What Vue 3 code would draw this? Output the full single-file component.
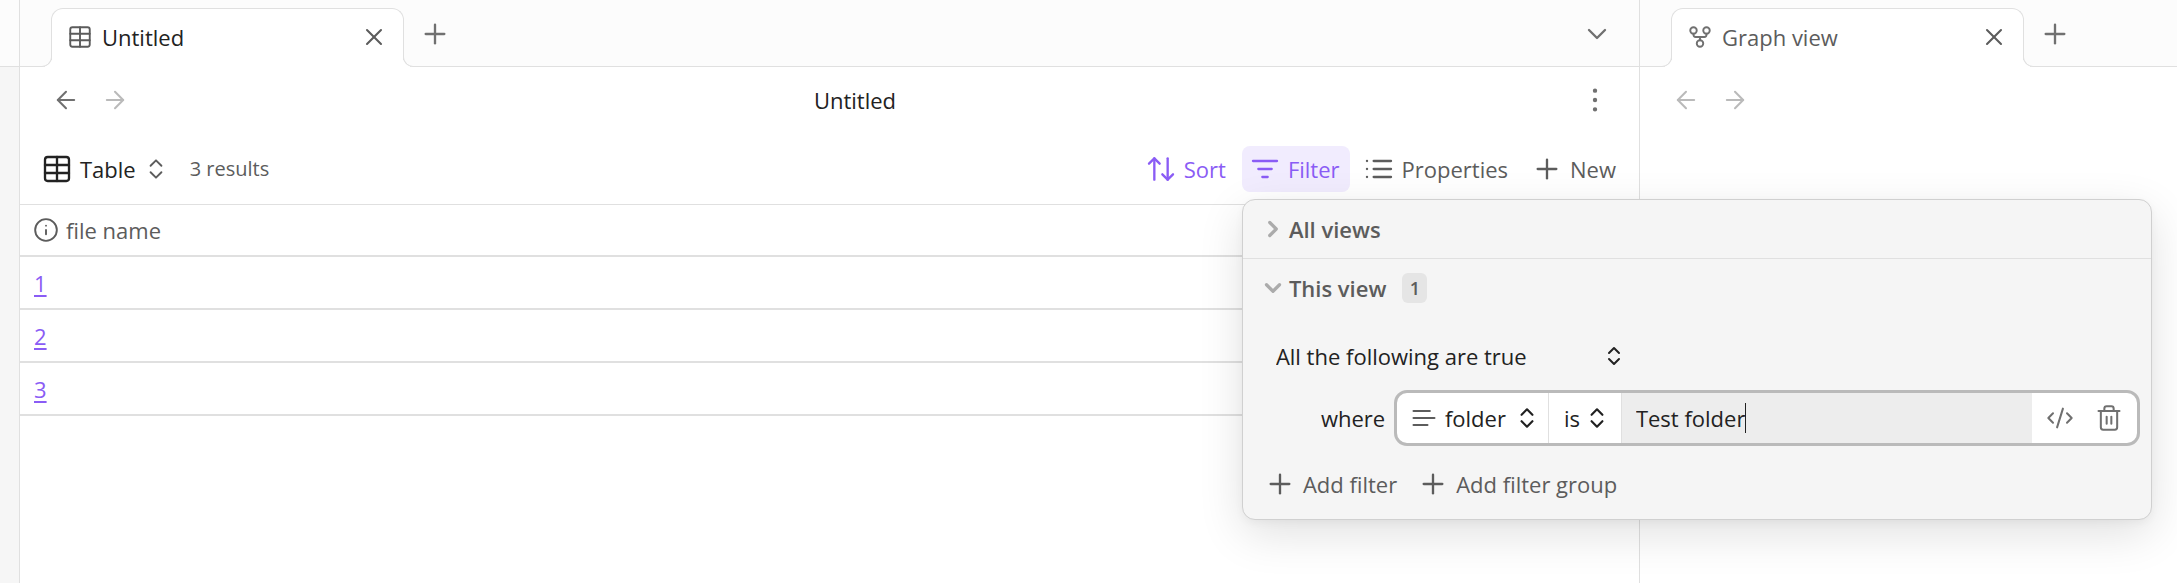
<script setup>
import { ref } from 'vue'

const icons = {
  table: ['M5 3h14a2 2 0 0 1 2 2v14a2 2 0 0 1-2 2H5a2 2 0 0 1-2-2V5a2 2 0 0 1 2-2z', 'M12 3v18', 'M3 9h18', 'M3 15h18'],
  close: ['M18 6 6 18', 'm6 6 12 12'],
  plus: ['M5 12h14', 'M12 5v14'],
  down: ['m6 9 6 6 6-6'],
  right: ['m9 18 6-6-6-6'],
  back: ['m12 19-7-7 7-7', 'M19 12H5'],
  forward: ['M5 12h14', 'm12 5 7 7-7 7'],
  graph: [
    'M15 18a3 3 0 1 1-6 0a3 3 0 0 1 6 0z',
    'M9 6a3 3 0 1 1-6 0a3 3 0 0 1 6 0z',
    'M21 6a3 3 0 1 1-6 0a3 3 0 0 1 6 0z',
    'M18 9v1a2 2 0 0 1-2 2H8a2 2 0 0 1-2-2V9',
    'M12 12v3',
  ],
  updown: ['m7 15 5 5 5-5', 'm7 9 5-5 5 5'],
  sort: ['m21 16-4 4-4-4', 'M17 20V4', 'm3 8 4-4 4 4', 'M7 4v16'],
  filter: ['M3 6h18', 'M7 12h10', 'M10 18h4'],
  list: ['M8 6h13', 'M8 12h13', 'M8 18h13', 'M3 6h.01', 'M3 12h.01', 'M3 18h.01'],
  info: ['M22 12a10 10 0 1 1-20 0a10 10 0 0 1 20 0z', 'M12 16v-4', 'M12 8h.01'],
  text: ['M17 6H3', 'M21 12H3', 'M15 18H3'],
  code: ['m18 16 4-4-4-4', 'm6 8-4 4 4 4', 'm14.5 4-5 16'],
  trash: [
    'M3 6h18',
    'M19 6v14a2 2 0 0 1-2 2H7a2 2 0 0 1-2-2V6',
    'M8 6V4a2 2 0 0 1 2-2h4a2 2 0 0 1 2 2v2',
    'M10 11v6',
    'M14 11v6',
  ],
}

const rows = ['1', '2', '3']
const conjunction = ref('All the following are true')
const property = ref('folder')
const operator = ref('is')
const value = ref('Test folder')
</script>

<template>
  <div class="workspace">
    <div class="ribbon"><div class="ribbon-head"></div></div>

    <section class="pane main-pane">
      <header class="tabs">
        <div class="tab">
          <svg class="icon s26" viewBox="0 0 24 24"><path v-for="d in icons.table" :key="d" :d="d" /></svg>
          <span class="tab-title strong">Untitled</span>
          <button class="bare" aria-label="Close tab">
            <svg class="icon s28" viewBox="0 0 24 24"><path v-for="d in icons.close" :key="d" :d="d" /></svg>
          </button>
        </div>
        <button class="bare new-tab" aria-label="New tab">
          <svg class="icon s32" viewBox="0 0 24 24"><path v-for="d in icons.plus" :key="d" :d="d" /></svg>
        </button>
        <button class="bare tab-list" aria-label="Tab list">
          <svg class="icon s32" viewBox="0 0 24 24"><path v-for="d in icons.down" :key="d" :d="d" /></svg>
        </button>
      </header>

      <div class="view-header">
        <div class="nav">
          <button class="bare" aria-label="Back">
            <svg class="icon s28" viewBox="0 0 24 24"><path v-for="d in icons.back" :key="d" :d="d" /></svg>
          </button>
          <button class="bare faded" aria-label="Forward" disabled>
            <svg class="icon s28" viewBox="0 0 24 24"><path v-for="d in icons.forward" :key="d" :d="d" /></svg>
          </button>
        </div>
        <span class="view-title">Untitled</span>
        <button class="bare" aria-label="More options">
          <svg class="icon s28 dots" viewBox="0 0 24 24">
            <circle cx="12" cy="4" r="1" /><circle cx="12" cy="12" r="1" /><circle cx="12" cy="20" r="1" />
          </svg>
        </button>
      </div>

      <div class="toolbar">
        <button class="tool view-switch">
          <svg class="icon s32" viewBox="0 0 24 24"><path v-for="d in icons.table" :key="d" :d="d" /></svg>
          <span>Table</span>
          <svg class="icon s26 muted" viewBox="0 0 24 24"><path v-for="d in icons.updown" :key="d" :d="d" /></svg>
        </button>
        <span class="results">3 results</span>

        <div class="tools">
          <button class="tool accent">
            <svg class="icon s32" viewBox="0 0 24 24"><path v-for="d in icons.sort" :key="d" :d="d" /></svg>
            <span>Sort</span>
          </button>
          <div class="anchor">
            <button class="tool accent active" aria-expanded="true">
              <svg class="icon s32" viewBox="0 0 24 24"><path v-for="d in icons.filter" :key="d" :d="d" /></svg>
              <span>Filter</span>
            </button>

            <div class="popover">
              <button class="group-head">
                <svg class="icon s26 thick" viewBox="0 0 24 24"><path v-for="d in icons.right" :key="d" :d="d" /></svg>
                <span>All views</span>
              </button>
              <div class="group">
                <button class="group-head">
                  <svg class="icon s26 thick" viewBox="0 0 24 24"><path v-for="d in icons.down" :key="d" :d="d" /></svg>
                  <span>This view</span>
                  <span class="badge">1</span>
                </button>

                <label class="pick conjunction">
                  <select v-model="conjunction" aria-label="Conjunction">
                    <option>All the following are true</option>
                  </select>
                  <svg class="icon s24 bold" viewBox="0 0 24 24"><path v-for="d in icons.updown" :key="d" :d="d" /></svg>
                </label>

                <div class="rule">
                  <span class="where">where</span>
                  <div class="statement">
                    <label class="pick property">
                      <svg class="icon s28 muted" viewBox="0 0 24 24"><path v-for="d in icons.text" :key="d" :d="d" /></svg>
                      <select v-model="property" aria-label="Property"><option>folder</option></select>
                      <svg class="icon s26 bold" viewBox="0 0 24 24"><path v-for="d in icons.updown" :key="d" :d="d" /></svg>
                    </label>
                    <label class="pick operator">
                      <select v-model="operator" aria-label="Operator"><option>is</option></select>
                      <svg class="icon s26 bold" viewBox="0 0 24 24"><path v-for="d in icons.updown" :key="d" :d="d" /></svg>
                    </label>
                    <label class="value">
                      <input v-model="value" type="text" aria-label="Value" />
                      <span class="caret"></span>
                    </label>
                    <div class="statement-actions">
                      <button class="bare" aria-label="Advanced editor">
                        <svg class="icon s28" viewBox="0 0 24 24"><path v-for="d in icons.code" :key="d" :d="d" /></svg>
                      </button>
                      <button class="bare" aria-label="Delete filter">
                        <svg class="icon s28" viewBox="0 0 24 24"><path v-for="d in icons.trash" :key="d" :d="d" /></svg>
                      </button>
                    </div>
                  </div>
                </div>

                <div class="adders">
                  <button class="adder">
                    <svg class="icon s32" viewBox="0 0 24 24"><path v-for="d in icons.plus" :key="d" :d="d" /></svg>
                    <span>Add filter</span>
                  </button>
                  <button class="adder">
                    <svg class="icon s32" viewBox="0 0 24 24"><path v-for="d in icons.plus" :key="d" :d="d" /></svg>
                    <span>Add filter group</span>
                  </button>
                </div>
              </div>
            </div>
          </div>
          <button class="tool">
            <svg class="icon s32" viewBox="0 0 24 24"><path v-for="d in icons.list" :key="d" :d="d" /></svg>
            <span>Properties</span>
          </button>
          <button class="tool">
            <svg class="icon s32" viewBox="0 0 24 24"><path v-for="d in icons.plus" :key="d" :d="d" /></svg>
            <span>New</span>
          </button>
        </div>
      </div>

      <table class="grid">
        <thead>
          <tr>
            <th scope="col">
              <div class="col-head">
                <svg class="icon s26" viewBox="0 0 24 24"><path v-for="d in icons.info" :key="d" :d="d" /></svg>
                <span>file name</span>
              </div>
            </th>
          </tr>
        </thead>
        <tbody>
          <tr v-for="name in rows" :key="name">
            <td><a href="#">{{ name }}</a></td>
          </tr>
        </tbody>
      </table>
    </section>

    <section class="pane side-pane">
      <header class="tabs">
        <div class="tab">
          <svg class="icon s26 soft" viewBox="0 0 24 24"><path v-for="d in icons.graph" :key="d" :d="d" /></svg>
          <span class="tab-title">Graph view</span>
          <button class="bare" aria-label="Close tab">
            <svg class="icon s28" viewBox="0 0 24 24"><path v-for="d in icons.close" :key="d" :d="d" /></svg>
          </button>
        </div>
        <button class="bare new-tab" aria-label="New tab">
          <svg class="icon s32" viewBox="0 0 24 24"><path v-for="d in icons.plus" :key="d" :d="d" /></svg>
        </button>
      </header>
      <div class="view-header">
        <div class="nav">
          <button class="bare faded" aria-label="Back" disabled>
            <svg class="icon s28" viewBox="0 0 24 24"><path v-for="d in icons.back" :key="d" :d="d" /></svg>
          </button>
          <button class="bare faded" aria-label="Forward" disabled>
            <svg class="icon s28" viewBox="0 0 24 24"><path v-for="d in icons.forward" :key="d" :d="d" /></svg>
          </button>
        </div>
      </div>
    </section>
  </div>
</template>

<style>
body {
  background: #fff;
}
</style>

<style scoped>
.workspace,
.workspace * {
  box-sizing: border-box;
}
.workspace {
  display: grid;
  grid-template-columns: 20px minmax(0, 1620fr) minmax(0, 537fr);
  min-height: 100vh;
  overflow: hidden;
  font-family: "Open Sans", "Noto Sans", sans-serif;
  font-size: 22px;
  font-weight: 400;
  line-height: 30px;
  color: #222;
}
button,
select,
input {
  font: inherit;
  color: inherit;
  margin: 0;
  padding: 0;
  border: 0;
  background: none;
}
.bare {
  display: flex;
  color: #707070;
}
.bare.faded {
  color: #bababa;
}
.icon {
  flex: none;
  display: block;
  fill: none;
  stroke: currentColor;
  stroke-width: 1.75;
  stroke-linecap: round;
  stroke-linejoin: round;
}
.icon.dots {
  fill: currentColor;
}
.icon.bold {
  stroke-width: 2;
}
.icon.thick {
  stroke-width: 3;
  color: #ababab;
}
.icon.muted {
  color: #5c5c5c;
}
.icon.soft {
  color: #707070;
}
.s24 { width: 24px; height: 24px; }
.s26 { width: 26px; height: 26px; }
.s28 { width: 28px; height: 28px; }
.s32 { width: 32px; height: 32px; }

.ribbon {
  background: #f6f6f6;
  border-right: 1px solid #e0e0e0;
}
.ribbon-head {
  height: 67px;
  background: #fcfcfc;
  border-bottom: 1px solid #e0e0e0;
}
.side-pane {
  border-left: 1px solid #e0e0e0;
  margin-left: -1px;
}

.tabs {
  display: flex;
  align-items: center;
  height: 67px;
  padding: 2px 27px 0 31px;
  background: #fcfcfc;
  border-bottom: 1px solid #e0e0e0;
}
.tab {
  position: relative;
  display: flex;
  align-items: center;
  align-self: flex-end;
  width: 353px;
  height: 59px;
  margin-bottom: -1px;
  padding: 0 15px 2px;
  background: #fff;
  border: 1px solid #e0e0e0;
  border-bottom: 0;
  border-radius: 12px 12px 0 0;
  color: #5c5c5c;
}
.tab::before,
.tab::after {
  content: "";
  position: absolute;
  bottom: 0;
  width: 10px;
  height: 10px;
  border: 1px solid #e0e0e0;
  border-top: 0;
  background: #fcfcfc;
}
.tab::before {
  right: 100%;
  border-left: 0;
  border-radius: 0 0 10px 0;
  box-shadow: 4px 4px 0 #fff;
  clip-path: inset(0 -1px 0 0);
}
.tab::after {
  left: 100%;
  border-right: 0;
  border-radius: 0 0 0 10px;
  box-shadow: -4px 4px 0 #fff;
  clip-path: inset(0 0 0 -1px);
}
.tab .bare {
  color: #5c5c5c;
}
.tab-title {
  flex: 1;
  margin-left: 9px;
}
.tab-title.strong {
  color: #222;
}
.new-tab {
  margin-left: 15px;
}
.tab-list {
  margin-left: auto;
}

.view-header {
  display: grid;
  grid-template-columns: auto 1fr auto;
  align-items: center;
  height: 66px;
  padding: 0 31px 0 32px;
}
.nav {
  display: flex;
  gap: 21px;
}
.view-title {
  text-align: center;
}

.toolbar {
  display: flex;
  align-items: center;
  height: 72px;
  padding: 0 14px 0 14px;
  border-bottom: 1px solid #e0e0e0;
}
.tool {
  display: flex;
  align-items: center;
  gap: 7px;
  height: 46px;
  padding: 0 10px 0 7px;
  border-radius: 8px;
  color: #5c5c5c;
  white-space: nowrap;
}
.tool.accent {
  color: #8a5cf5;
}
.tool.active {
  background: #f1ecfe;
}
.view-switch {
  color: #222;
}
.results {
  margin-left: 11px;
  font-size: 20px;
  color: #5c5c5c;
}
.tools {
  display: flex;
  gap: 6px;
  margin-left: auto;
}
.anchor {
  position: relative;
}

.grid {
  width: 100%;
  border-collapse: separate;
  border-spacing: 0;
}
.grid th {
  height: 52px;
  padding: 0 13px;
  font-weight: inherit;
  text-align: left;
  color: #5c5c5c;
  border-bottom: 2px solid #e0e0e0;
}
.grid td {
  height: 53px;
  padding: 0 14px;
  border-bottom: 2px solid #e0e0e0;
}
.grid a {
  color: #8a5cf5;
  text-underline-offset: 3px;
  text-decoration-thickness: 2px;
}
.col-head {
  display: flex;
  align-items: center;
  gap: 7px;
}

.popover {
  position: absolute;
  z-index: 5;
  top: calc(100% + 7px);
  left: 0;
  width: 910px;
  background: #f5f5f5;
  border: 1px solid #d0d0d0;
  border-radius: 13px;
  box-shadow: 0 3px 8px rgba(0, 0, 0, 0.04), 0 14px 46px rgba(0, 0, 0, 0.12);
  color: #222;
}
.group-head {
  display: flex;
  align-items: center;
  gap: 3px;
  width: 100%;
  height: 58px;
  padding: 0 17px;
  font-weight: 600;
  color: #5c5c5c;
}
.group {
  border-top: 1px solid #e0e0e0;
  padding-bottom: 12px;
}
.badge {
  margin-left: 13px;
  width: 25px;
  height: 30px;
  border-radius: 6px;
  background: #e5e5e5;
  font-size: 18px;
  line-height: 30px;
  text-align: center;
}
.pick {
  display: flex;
  align-items: center;
}
.pick select {
  appearance: none;
  outline: none;
}
.conjunction {
  width: 350px;
  height: 46px;
  margin: 16px 0 11px 33px;
}
.conjunction select {
  flex: 1;
}
.rule {
  display: flex;
  align-items: center;
  padding: 0 11px 0 78px;
}
.where {
  width: 73px;
}
.statement {
  flex: 1;
  display: flex;
  height: 56px;
  border: 3px solid #bababa;
  border-radius: 13px;
  background: #fff;
  overflow: hidden;
}
.property {
  width: 152px;
  padding-left: 13px;
  border-right: 1px solid #e0e0e0;
}
.property select {
  width: 70px;
  margin-left: 7px;
}
.operator {
  width: 73px;
  padding-left: 15px;
  border-right: 1px solid #e0e0e0;
}
.operator select {
  width: 21px;
}
.pick .s26.bold {
  margin-left: -1px;
}
.value {
  flex: 1;
  display: flex;
  align-items: center;
  padding-left: 14px;
  background: #ededed;
}
.value input {
  field-sizing: content;
  outline: none;
}
.caret {
  width: 1px;
  height: 30px;
  background: #222;
}
.statement-actions {
  display: flex;
  align-items: center;
  gap: 21px;
  width: 105px;
  padding-left: 14px;
}
.adders {
  display: flex;
  gap: 20px;
  padding: 15px 21px 0;
}
.adder {
  display: flex;
  align-items: center;
  gap: 7px;
  height: 46px;
  color: #5c5c5c;
}
</style>
